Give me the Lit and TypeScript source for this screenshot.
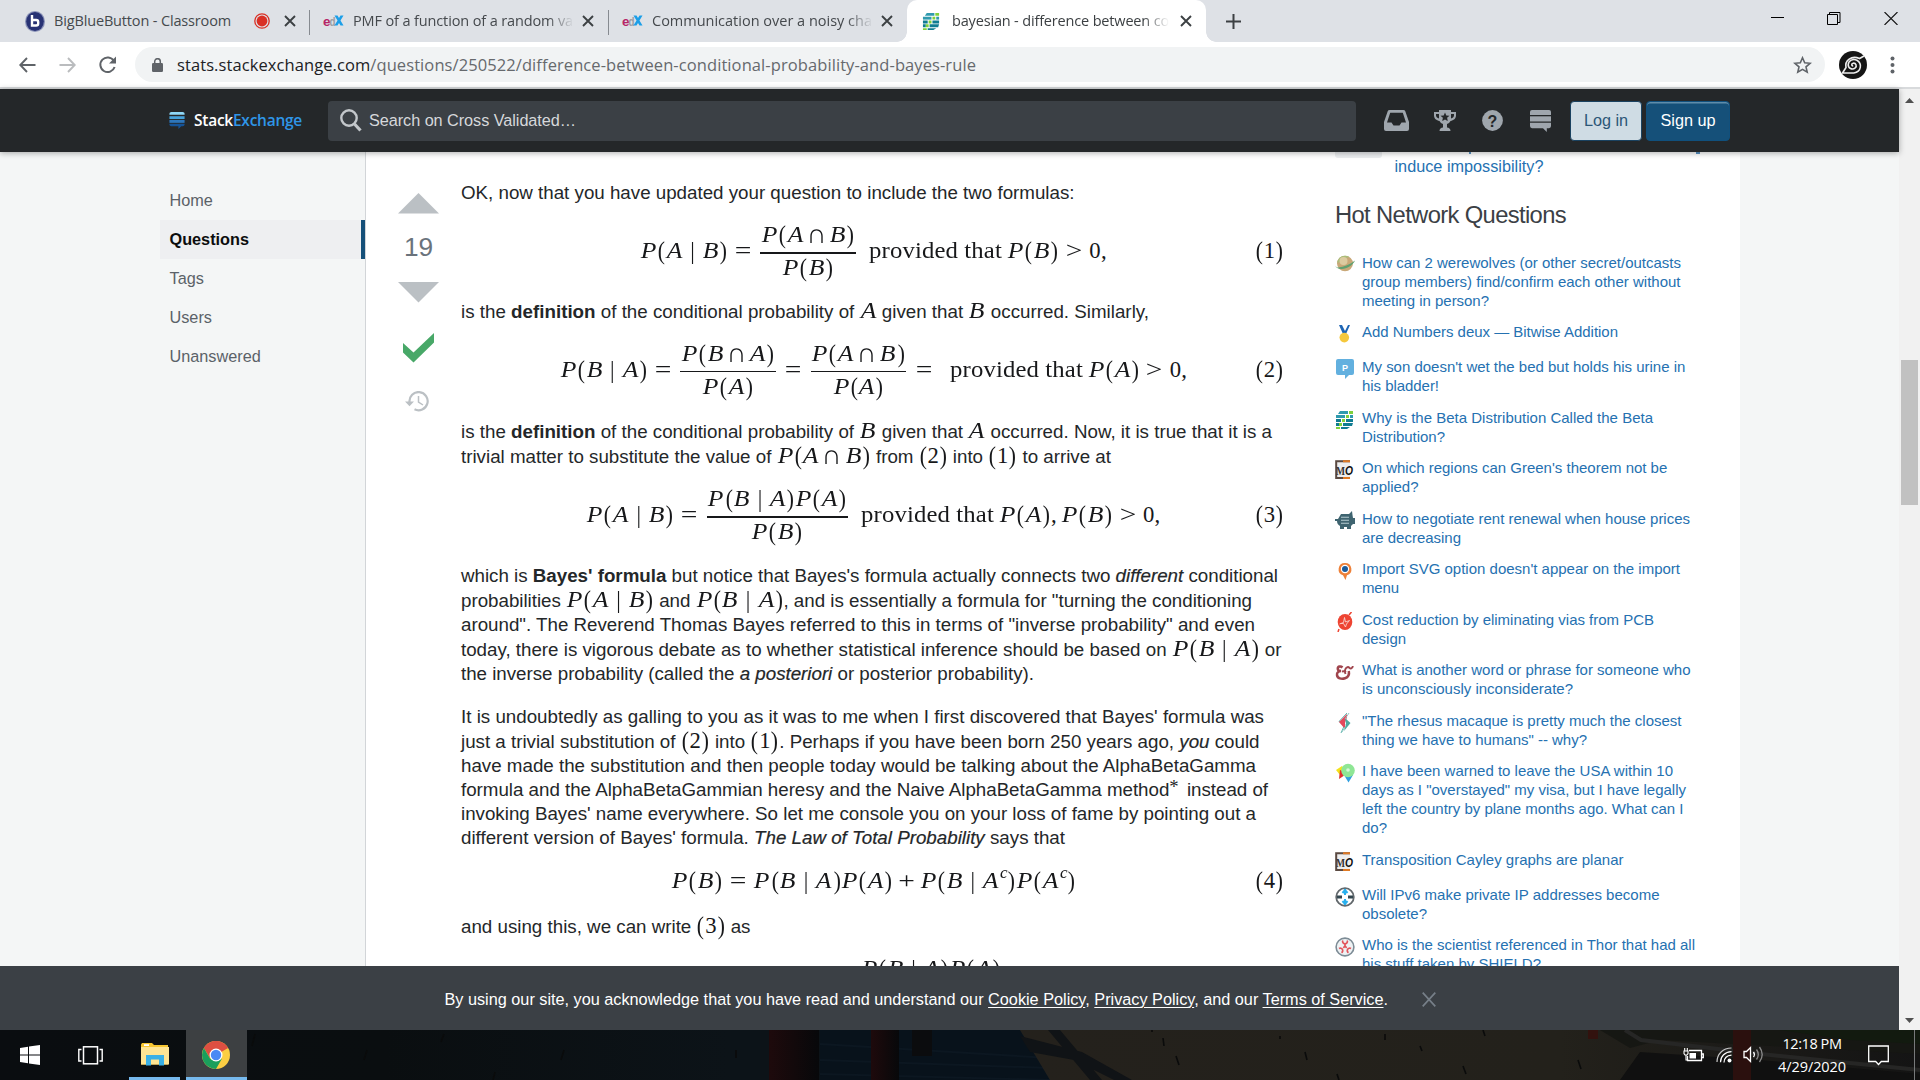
import { LitElement, html, svg, css, TemplateResult } from "lit";
import { customElement } from "lit/decorators.js";

type T = TemplateResult;

/* ---------- math typesetting ---------- */
const WIDTHS: Record<string, number> = {
  P: 0.751, A: 0.75, B: 0.759, "(": 0.389, ")": 0.389, "|": 0.834, "=": 1.334,
  ">": 1.334, "+": 1.2, "∩": 1.111, ",": 0.278, " ": 0.167,
};
const glyph = (ch: string) => {
  const w = WIDTHS[ch] ?? 0.5;
  if (ch === "c") return html`<span class="g sup-c" style="width:.35em">c</span>`;
  const kind = /[PAB]/.test(ch) ? "it" : /[()]/.test(ch) ? "par" : ch === "|" ? "mid" : ch === "∩" ? "cap" : /[=>+]/.test(ch) ? "op" : "rm";
  return html`<span class="g ${kind}" style="width:${w}em">${ch}</span>`;
};
const m = (s: string) => html`<span class="m">${[...s].map(glyph)}</span>`;
const frac = (n: string, d: string, thick = true) => html`<span class="frac">
  <span class="num">${m(n)}</span><span class="rule ${thick ? "thick" : ""}"></span><span class="den">${m(d)}</span></span>`;
const provided = () => html`<span class="prov"><span class="fit wide" data-w="122">provided that</span></span>`;

/* ---------- icons ---------- */
const statsIcon = svg`
  <g fill="#2f9aae"><path d="M5 1h8v3H3z"/><path d="M1 5h9v3H1z"/><path d="M15 5h3v3h-3z"/></g>
  <g fill="#107c92"><path d="M1 9h5v3H1zM11 9h7v3h-7z"/><path d="M8 13h10l-1 3H8zM1 13h3v3H1z"/><path d="M6 17h9l-3 2H6z"/></g>
  <g fill="#7fd13b"><path d="M14 1h4v3h-4zM11 5h3v3h-3zM7 9h3v3H7zM4 13h3v3H4zM1 17h4v2H1z"/></g>`;
const mo = svg`<rect x="0" y="0" width="15" height="19" fill="#eee"/><path d="M15 1.2H1.2V18H15" fill="none" stroke="#5b4a42" stroke-width="2"/>
  <path d="M8 1.2h7M8 18h7" stroke="#e07a24" stroke-width="2"/><text x="1" y="14.5" font-family="Liberation Serif" font-weight="700" font-size="12" textLength="9" lengthAdjust="spacingAndGlyphs" fill="#333">M</text><text x="10" y="14.5" font-family="Liberation Sans" font-style="italic" font-weight="700" font-size="12" fill="#111" textLength="8" lengthAdjust="spacingAndGlyphs">O</text>`;
const ICONS: Record<string, unknown> = {
  planet: svg`<ellipse cx="10" cy="8.5" rx="8" ry="7.8" fill="#c9a878"/><path d="M2.500 6a8 7.800 0 0 1 12-4c-4 0-7 4-12 6z" fill="#a9bd7a"/><circle cx="8.500" cy="6" r="4" fill="#dccba0"/><path d="M0 10.500c1 1.500 2 2 3 2 6-.5 12-3 17-7-2 5-9 9-14 8.500-3 0-5-1.500-6-3.500z" fill="#5fa070"/>`,
  medal: svg`<path d="M4 1h3l3 6 3-6h2l-4 9H8z" fill="#1f66b5"/><circle cx="9.3" cy="13.6" r="4.8" fill="#f5c83c"/>`,
  parent: svg`<path d="M3 0h14a2 2 0 0 1 2 2v12a2 2 0 0 1-2 2h-3l-4 4v-4H3a2 2 0 0 1-2-2V2a2 2 0 0 1 2-2z" fill="#62b0df"/><text x="7" y="12" font-family="Liberation Sans" font-weight="700" font-size="9" fill="#fff">P</text>`,
  stats: statsIcon,
  mo,
  pig: svg`<path d="M0 8h3l3-5h8l3-3 .5 4L18 7h2v6h-2l-2 2v3h-4v-2H9v2H5v-3c-2-1-3-3-3-5H0z" fill="#3f6470"/><path d="M6 6.2h8M6 9.2h8M6 12.2h8" stroke="#b7cbd1" stroke-width="1.1"/>`,
  gis: svg`<path d="M10 2a6.3 6.3 0 0 0-2 12.3L10.5 19l1.5-4.7A6.3 6.3 0 0 0 10 2z" fill="#ee8139"/><circle cx="10" cy="8" r="4.2" fill="#fff"/><circle cx="10" cy="8" r="3" fill="#1b5a9a"/>`,
  pcb: svg`<ellipse cx="10" cy="10" rx="7.3" ry="8" fill="#ee4432"/><path d="M14 3l2.5-3M4 17l-1 3" stroke="#ee4432" stroke-width="1.5"/><path d="M4.500 12l4-1.500 1-5 1 4.500 4-1.500-3 3.500-1 3-2-3.500h-3" fill="none" stroke="#f9d3cd" stroke-width=".9"/>`,
  amp: svg`<path d="M7.500 5.500C5.500 3.500 2.500 4.500 2.800 7c.2 1.600 1.700 2.300 3.200 2-2.500 0-4.300 1.500-4 4 .4 3.500 4.500 4.500 8 3.300 3.300-1.200 4.500-4 3.800-7.300" fill="none" stroke="#a0454d" stroke-width="2.500"/><path d="M7 9.500c1.500-.3 3-.3 4 .5M10.500 12c-1.500-3.500 0-6.500 2.500-7 1.500 0 1.500 1.800 3 1.500 1.300-.3 1.800-1.300 1.800-2.500" fill="none" stroke="#a0454d" stroke-width="1.900"/>`,
  dna: svg`<path d="M12 0L4 8.5l6 2.5-4 9" fill="none" stroke="#5fb5ae" stroke-width="1"/><path d="M12 1L4 9l6 7V9.500l2-5z" fill="#e4485c"/><path d="M10 5l5.500 5-6.500 8 2-7z" fill="#4fa9a0"/><path d="M14 0l-4 6M7 19l3-5" stroke="#8fc9c5"/>`,
  travel: svg`<path d="M1 7l6-4 4 6-6 3z" fill="#f3e21a"/><path d="M5 7l8 3-9 6z" fill="#e02f2f"/><path d="M9 12h9l-4.500 7.500z" fill="#2f9fe0"/><circle cx="13" cy="7.500" r="6.800" fill="#8fe695"/><circle cx="13" cy="7" r="1.800" fill="#d6f7d8"/>`,
  net: svg`<circle cx="10" cy="10" r="8.800" fill="#fff" stroke="#62686c" stroke-width="1.800"/><path d="M2 10h5M13 10h5" stroke="#33474f" stroke-width="3"/><path d="M10 2v6M10 12v6M7.500 6L10 3l2.500 3M7.500 14l2.500 3 2.500-3" stroke="#28b0ee" stroke-width="2" fill="none"/>`,
  scifi: svg`<circle cx="10" cy="10" r="8.900" fill="#eef2f4" stroke="#7d8c96" stroke-width="1.600"/><g fill="none" stroke="#e2555b" stroke-width="1.700"><path d="M7.800 3.500a2.400 2.400 0 1 0 4.400 0M10 7.300v2.200M8.300 10.800l1.200-1.200h1l1.200 1.200"/><path d="M4 11.500a2.300 2.300 0 1 1 2.500 4.300M16 11.500a2.300 2.300 0 1 0-2.500 4.300"/></g>`,
};
const ic = (name: string, s = 20) => html`<svg class="ic" width=${s} height=${s} viewBox="0 0 20 20">${ICONS[name]}</svg>`;

const HOT: { i: string; l: [string, number][] }[] = [
  { i: "planet", l: [["How can 2 werewolves (or other secret/outcasts", 319], ["group members) find/confirm each other without", 318.5], ["meeting in person?", 127]] },
  { i: "medal", l: [["Add Numbers deux — Bitwise Addition", 256]] },
  { i: "parent", l: [["My son doesn't wet the bed but holds his urine in", 323.3], ["his bladder!", 77]] },
  { i: "stats", l: [["Why is the Beta Distribution Called the Beta", 291], ["Distribution?", 83]] },
  { i: "mo", l: [["On which regions can Green's theorem not be", 305.3], ["applied?", 56.5]] },
  { i: "pig", l: [["How to negotiate rent renewal when house prices", 328], ["are decreasing", 99]] },
  { i: "gis", l: [["Import SVG option doesn't appear on the import", 318], ["menu", 37]] },
  { i: "pcb", l: [["Cost reduction by eliminating vias from PCB", 292], ["design", 44]] },
  { i: "amp", l: [["What is another word or phrase for someone who", 328.5], ["is unconsciously inconsiderate?", 211]] },
  { i: "dna", l: [["\"The rhesus macaque is pretty much the closest", 319.5], ["thing we have to humans\" -- why?", 225]] },
  { i: "travel", l: [["I have been warned to leave the USA within 10", 311], ["days as I \"overstayed\" my visa, but I have legally", 324], ["left the country by plane months ago. What can I", 321.5], ["do?", 25]] },
  { i: "mo", l: [["Transposition Cayley graphs are planar", 261.5]] },
  { i: "net", l: [["Will IPv6 make private IP addresses become", 297.5], ["obsolete?", 65]] },
  { i: "scifi", l: [["Who is the scientist referenced in Thor that had all", 333], ["his stuff taken by SHIELD?", 179]] },
];

const closeX = html`<svg class="tx" width="12" height="12" viewBox="0 0 12 12"><path d="M1 1l10 10M11 1L1 11" stroke="#3c4043" stroke-width="1.9"/></svg>`;
const edx = html`<svg width="21" height="14" viewBox="0 0 21 14"><text x="0" y="11.500" font-family="Liberation Sans" font-weight="700" font-size="13" textLength="7.500" lengthAdjust="spacingAndGlyphs" fill="#b72667">e</text><text x="6.500" y="11.500" font-family="Liberation Sans" font-weight="700" font-size="12" textLength="6" lengthAdjust="spacingAndGlyphs" fill="#9a9da3">d</text><path d="M11.500 1.500h3l1.500 2.500 1.500-2.500h3L17.500 6.500l3 5h-3L16 9l-1.500 2.500h-3l3-5z" fill="#1c9fe8"/></svg>`;

@customElement("app-root")
export class AppRoot extends LitElement {
  static styles = css`
    :host { display: block; width: 1920px; height: 1080px; overflow: hidden; font-family: "Liberation Sans", Arial, sans-serif; color: #242729; }
    * { box-sizing: border-box; }
    svg { display: block; flex: none; }
    .fit { display: inline-block; white-space: nowrap; }
    .app { width: 1920px; height: 1080px; display: flex; flex-direction: column; overflow: hidden; }
    .ui { font-family: "Open Sans", "Noto Sans", sans-serif; }

    .tabs { height: 42px; flex: none; background: #dee1e6; display: flex; font-size: 14.5px; color: #45494d; }
    .tab { height: 42px; display: flex; align-items: center; position: relative; }
    .tab .t { overflow: hidden; white-space: nowrap; line-height: 42px; height: 42px; flex: none; }
    .fade { -webkit-mask-image: linear-gradient(90deg, #000 88%, transparent 100%); }
    .sep { width: 1px; height: 25px; background: #868a90; align-self: center; margin-top: 2px; flex: none; }
    .t1 { width: 309px; padding-left: 25px; }
    .t1 .t { margin-left: 9px; width: 192px; }
    .t1 .rec { margin-left: 29px; }
    .t1 .tx { margin-left: 14px; }
    .t2 { width: 298px; padding-left: 13px; }
    .t2 .t { margin-left: 9px; width: 221px; }
    .t2 .tx { margin-left: 8px; }
    .t4 { width: 299px; background: #fff; border-radius: 10px 10px 0 0; padding-left: 15px; color: #3c4043; }
    .t4 .t { margin-left: 11px; width: 217px; }
    .t4 .tx { margin-left: 11px; }
    .t4::before, .t4::after { content: ""; position: absolute; bottom: 0; width: 10px; height: 10px; }
    .t4::before { left: -10px; background: radial-gradient(circle at 0 0, transparent 9.5px, #fff 10px); }
    .t4::after { right: -10px; background: radial-gradient(circle at 100% 0, transparent 9.5px, #fff 10px); }
    .plus { margin: 14px 0 0 20px; }
    .win { margin-left: auto; display: flex; padding: 12px 22px 0 0; gap: 43px; }

    .bar { height: 47px; flex: none; background: #fff; border-bottom: 2px solid #d8dadc; display: flex; align-items: center; padding-left: 18px; }
    .bar .b2 { margin-left: 21px; }
    .bar .b3 { margin-left: 21px; }
    .omni { margin-left: 18px; margin-right: 14px; width: 1690px; height: 35px; border-radius: 18px; background: #f1f3f4; display: flex; align-items: center; padding: 0 13px 0 17px; font-size: 16.5px; color: #66696d; }
    .omni .url { margin-left: 14px; line-height: 33px; }
    .omni b { font-weight: 400; color: #202124; }
    .omni .star { margin-left: auto; }
    .kebab { margin-left: 23px; }

    .view { height: 941px; flex: none; display: flex; }
    .page { width: 1899px; display: flex; flex-direction: column; position: relative; }
    .sb { width: 21px; background: #f1f1f1; display: flex; flex-direction: column; align-items: center; padding-top: 9px; }
    .sb .thumb { width: 17px; height: 145px; margin-top: 257px; background: #c1c1c1; }
    .sb .dn { margin-top: auto; margin-bottom: 7px; }

    .top { height: 63px; flex: none; background: #242729; display: flex; align-items: center; padding-left: 169px; box-shadow: 0 1px 6px rgba(12,13,14,.35); position: relative; z-index: 2; }
    .mark { margin-top: -2px; }
    .logo { margin-left: 9px; margin-top: -2px; width: 134px; font-size: 15.500px; font-family: "Open Sans", sans-serif; font-weight: 600; color: #fff; line-height: 20px; }
    .logo b { color: #2f96e8; font-weight: 600; }
    .search { width: 1028px; height: 40px; background: #3b4045; border-radius: 4px; display: flex; align-items: center; padding-left: 12px; font-size: 16.25px; color: #d6d8db; }
    .search .fit { margin-left: 7px; }
    .ticons { display: flex; align-items: center; margin-left: 28px; width: 186px; }
    .i2 { margin-left: 25px; } .i3 { margin-left: 26px; } .i4 { margin-left: 27px; }
    .btn { height: 40px; border-radius: 4px; font-size: 16.25px; display: flex; align-items: center; justify-content: center; border: 1px solid #1a4260; }
    .login { width: 72px; background: #cfdce4; color: #2c5777; }
    .signup { width: 84px; margin-left: 4px; background: #155079; color: #fff; border-color: #10507d; box-shadow: inset 0 1.5px 0 #5f8caa; }

    .main { height: 814px; flex: none; background: #f4f6f6; display: flex; padding-left: 160px; overflow: hidden; }
    .nav { width: 205px; padding-top: 29px; font-size: 16.25px; color: #5b6268; }
    .nav div { height: 39px; line-height: 39px; padding-left: 9.500px; }
    .nav .on { background: #eeeff1; font-weight: 700; color: #0c0d0e; border-right: 4px solid #155079; }
    .content { width: 1375px; background: #fff; border-left: 1px solid #d2d5d8; display: flex; }
    .vote { width: 95px; padding: 41px 0 0 32px; display: flex; flex-direction: column; }
    .vote .n { width: 41px; text-align: center; font-size: 26.25px; line-height: 30px; color: #6a737c; margin: 18px 0 20px; }
    .post { width: 825px; padding-top: 29px; font-size: 18.75px; color: #242729; }
    .ln { height: 24px; line-height: 24px; white-space: nowrap; width: max-content; }
    .ln.k { height: 25px; }
    .p2 { margin-top: 19px; }
    i { font-style: italic; -webkit-text-stroke: .2px #242729; }

    .m { font: 22.7px "Liberation Serif", serif; line-height: 0; letter-spacing: 0; white-space: nowrap; color: #17181a; }
    .g { display: inline-block; line-height: 0; text-align: center; height: 0; }
    .it { font-style: italic; transform: scale(1.13, 1.05); }
    .par { transform: scale(.95, 1.14); }
    .mid { transform: scaleY(1.14); }
    .op { transform: scaleX(1.3); }
    .cap { transform: scale(1.22, 1.2); }
    .sup-c { font-style: italic; position: relative; top: -8px; transform: scale(.75); }
    .star-sup { position: relative; top: -3px; font-family: "Liberation Serif", serif; line-height: 0; margin-right: 3px; }
    .eq { height: 95px; display: grid; grid-template-columns: 1fr auto 1fr; padding-top: 34px; font: 22.7px/24px "Liberation Serif", serif; color: #17181a; }
    .eq.e2 { height: 96px; }
    .eq.e4 { height: 65px; padding-top: 19px; }
    .eq .c { grid-column: 2; display: flex; align-items: flex-start; height: 24px; }
    .eq .c.shift { padding-left: 115px; }
    .eq .c .m, .eq .r .m, .num .m, .den .m { line-height: 24px; }
    .eq .r { grid-column: 3; justify-self: end; padding-right: 2px; height: 24px; }
    .frac { display: flex; flex-direction: column; align-items: center; margin: -16px 2.700px 0 2.200px; }
    .num { height: 29px; padding: 0 .7px; }
    .rule { width: 100%; height: 1px; background: #17181a; margin-bottom: 1px; flex: none; }
    .rule.thick { height: 2px; margin-bottom: 0; }
    .den { height: 24px; margin-top: 2px; }
    .prov { margin-left: 10.500px; width: 138px; flex: none; }
    .wide { transform: scaleX(1.09); transform-origin: 0 0; }

    .aside { padding-left: 49px; width: 420px; font-size: 15px; color: #2571b1; }
    .cut { height: 5px; display: flex; align-items: flex-start; }
    .cut .box { width: 47px; height: 6px; background: #eceef0; border-radius: 0 0 3px 3px; }
    .cut .d1 { width: 2px; height: 1.500px; background: #5a93c4; margin-left: 87px; }
    .cut .d2 { width: 4px; height: 1.500px; background: #5a93c4; margin-left: 225px; }
    .rel { margin: 0 0 0 59.500px; font-size: 16.25px; line-height: 19px; height: 19px; }
    .hnq { font-size: 23.75px; line-height: 28px; color: #3b4045; margin-top: 25px; margin-bottom: 23.800px; height: 28px; }
    .hot { display: flex; min-height: 22.500px; margin-bottom: 12.500px; line-height: 19px; }
    .hot .ic { margin: 2px 7px 0 0; }
    .hot .x { height: 19px; white-space: nowrap; width: max-content; }

    .cookie { height: 64px; flex: none; background: #3b4045; color: #fff; font-size: 16.25px; display: flex; align-items: center; padding: 2px 0 0 444.500px; }
    .cookie .cx { margin-left: 34px; }
    u { text-underline-offset: 2px; text-decoration-thickness: 1.200px; }

    .task { height: 50px; flex: none; display: flex; position: relative; overflow: hidden; color: #fff; background: #0a0e12; }
    .wall { position: absolute; left: 0; top: 0; }
    .task > :not(.wall) { position: relative; }
    .tb { display: flex; justify-content: center; height: 50px; padding-top: 11px; border-bottom: 3px solid transparent; }
    .start { width: 60px; padding-top: 15px; } .tv { width: 60px; padding-top: 16px; }
    .fold { width: 51px; margin-left: 9px; border-color: #76b9ed; padding-top: 13px; }
    .chr { width: 61px; margin-left: 6px; background: #3d4042; border-color: #76b9ed; padding-right: 1px; }
    .tray { margin-left: auto; display: flex; padding-right: 5px; }
    .bat { margin: 17px 12px 0 0; } .wifi { margin: 17px 11px 0 0; } .vol { margin: 15px 14px 0 0; }
    .clock { width: 68px; text-align: center; font-size: 14.500px; line-height: 23px; padding-top: 2px; margin-right: 22px; display: flex; flex-direction: column; align-items: center; }
    .note { margin-top: 15px; }
    .desk { width: 1px; height: 50px; background: #77797a; margin-left: 25px; }
  `;

  firstUpdated() {
    const width = (el: HTMLElement) => {
      const r = el.getBoundingClientRect().width;
      return el.classList.contains("wide") ? r / 1.09 : r;
    };
    this.renderRoot.querySelectorAll<HTMLElement>("[data-w]").forEach((el) => {
      const w = Number(el.dataset.w);
      const a = width(el);
      el.style.letterSpacing = "1px";
      const b = width(el);
      el.style.letterSpacing = b > a ? `${((w - a) / (b - a)).toFixed(4)}px` : "";
    });
  }

  ln(w: number, t: T | string, k = false) {
    return html`<div class="ln ${k ? "k" : ""}" data-w=${w}>${t}</div>`;
  }

  chrome() {
    return html`<div class="tabs ui">
      <div class="tab t1"><svg width="20" height="25" viewBox="0 0 20 25"><ellipse cx="10" cy="12.500" rx="10" ry="10.500" fill="#8b93b8"/><ellipse cx="10" cy="12.500" rx="8.800" ry="9.500" fill="#283274"/><path d="M7 6v10.500h4.200a2 2 0 0 0 2-2v-1.500a2 2 0 0 0-2-2H7" fill="none" stroke="#fff" stroke-width="2.400"/></svg>
        <span class="t"><span class="fit" data-w="177">BigBlueButton - Classroom</span></span>
        <svg class="rec" width="16" height="16" viewBox="0 0 16 16" style="margin-left:8px"><circle cx="8" cy="8" r="7.200" fill="none" stroke="#d93025" stroke-width="1.300"/><circle cx="8" cy="8" r="5.400" fill="#d93025"/></svg>${closeX}</div>
      <span class="sep"></span>
      <div class="tab t2">${edx}<span class="t fade"><span class="fit" data-w="220">PMF of a function of a random va</span></span>${closeX}</div>
      <span class="sep"></span>
      <div class="tab t2">${edx}<span class="t fade"><span class="fit" data-w="220">Communication over a noisy cha</span></span>${closeX}</div>
      <div class="tab t4">${ic("stats", 19)}<span class="t fade"><span class="fit" data-w="217">bayesian - difference between co</span></span>${closeX}</div>
      <svg class="plus" width="15" height="15" viewBox="0 0 15 15"><path d="M7.500 0v15M0 7.500h15" stroke="#3c4043" stroke-width="2"/></svg>
      <div class="win"><svg width="13" height="13"><path d="M0 5.500h13" stroke="#000"/></svg>
        <svg width="14" height="13" viewBox="0 0 14 13"><path d="M.5 2.500h10v10H.5zM2.500 2.500V.5h10.500v10h-2.500" fill="none" stroke="#000"/></svg>
        <svg width="14" height="13" viewBox="0 0 14 13"><path d="M.5 0l13 13M13.500 0L.5 13" stroke="#111" stroke-width="1.100"/></svg></div>
    </div>
    <div class="bar ui">
      <svg width="19" height="18" viewBox="0 0 19 18"><path d="M17.500 9H2.500M9 2L2.300 9 9 16" fill="none" stroke="#5f6368" stroke-width="1.900"/></svg>
      <svg class="b2" width="19" height="18" viewBox="0 0 19 18"><path d="M1.500 9h15M10 2l6.700 7L10 16" fill="none" stroke="#babcbe" stroke-width="1.900"/></svg>
      <svg class="b3" width="19" height="18" viewBox="0 0 19 18"><path d="M15.800 4.800A7.300 7.300 0 1 0 16.600 11" fill="none" stroke="#5f6368" stroke-width="2"/><path d="M18 .5v7h-7z" fill="#5f6368"/></svg>
      <div class="omni"><svg width="11" height="14" viewBox="0 0 11 14"><rect y="5" width="11" height="9" rx="1.200" fill="#5f6368"/><path d="M2.700 5V3.500a2.800 2.800 0 0 1 5.600 0V5" fill="none" stroke="#5f6368" stroke-width="1.500"/></svg>
        <span class="url fit" data-w="799"><b>stats.stackexchange.com</b>/questions/250522/difference-between-conditional-probability-and-bayes-rule</span>
        <svg class="star" width="19" height="18" viewBox="0 0 19 18"><path d="M9.500 1.800l2.200 5 5.400.5-4.100 3.600 1.200 5.300-4.700-2.800-4.700 2.800L6 10.900 1.900 7.300l5.400-.5z" fill="none" stroke="#5f6368" stroke-width="1.600"/></svg></div>
      <svg width="28" height="28" viewBox="0 0 28 28"><circle cx="14" cy="14" r="14" fill="#151515"/><path d="M14.200 14.800c-1.800.3-2-2.200 0-2.600 2.800-.3 4 2.800 2 4.700-3 2.500-7.200.3-7-3.400.3-4 5-6.200 8.700-4.200 5.500 3.200 4.500 11.700-3 12.700H3.500L7 16.500C5.500 9.500 12.500 4 20.500 7.500L25 5" fill="none" stroke="#eee" stroke-width="1.600"/></svg>
      <svg class="kebab" width="5" height="18" viewBox="0 0 5 18"><g fill="#5f6368"><circle cx="2.500" cy="2.500" r="2"/><circle cx="2.500" cy="9" r="2"/><circle cx="2.500" cy="15.500" r="2"/></g></svg>
    </div>`;
  }

  header() {
    const c = "#9fa6ad";
    return html`<div class="top">
      <svg class="mark" width="16" height="18" viewBox="0 0 16 19"><path d="M2 1h12a2 2 0 0 1 2 2v1H0V3a2 2 0 0 1 2-2z" fill="#8fd8f7"/><path d="M0 5.500h16v3H0z" fill="#46a2da"/><path d="M0 9.500h16v3H0z" fill="#2d76bb"/><path d="M0 13.500h16a2 2 0 0 1-2 2.500h-1.500L9.500 19v-3H2a2 2 0 0 1-2-2.500z" fill="#155397"/></svg>
      <span class="logo"><span class="fit" data-w="108">Stack<b>Exchange</b></span></span>
      <div class="search"><svg width="22" height="23" viewBox="0 0 22 23"><circle cx="9" cy="9" r="7.700" fill="none" stroke="#c3c7cb" stroke-width="2.400"/><path d="M14.500 15l6 6.500" stroke="#c3c7cb" stroke-width="3.200"/></svg><span class="fit" data-w="207">Search on Cross Validated…</span></div>
      <div class="ticons">
        <svg width="25" height="21" viewBox="0 0 25 21"><path fill-rule="evenodd" fill="${c}" d="M5.500 0h14a2 2 0 0 1 1.800 1.200L25 12v7a2 2 0 0 1-2 2H2a2 2 0 0 1-2-2v-7L3.700 1.200A2 2 0 0 1 5.500 0zM6.200 2.800L3 12.500h4.500l2 3h6l2-3H22L18.800 2.800z"/></svg>
        <svg class="i2" width="22" height="21" viewBox="0 0 22 21"><path fill="${c}" d="M5 0h12v2h5v3.500c0 3-2.500 5-5.500 5.500-.8 1.500-2 2.600-3.500 3v3.500c2 .3 3.500 1.200 3.500 3.500h-11c0-2.300 1.500-3.200 3.500-3.500V14c-1.500-.4-2.700-1.500-3.500-3C2.500 10.500 0 8.500 0 5.500V2h5z"/><path d="M2 4h3v4.500C3.500 8 2 7 2 5.500zM20 4h-3v4.500c1.500-.5 3-1.500 3-3zM11 2.500l1.300 2.900 3.200.3-2.400 2.100.7 3.200L11 9.400 8.200 11l.7-3.200-2.400-2.100 3.200-.3z" fill="#242729"/></svg>
        <svg class="i3" width="21" height="21" viewBox="0 0 21 21"><circle cx="10.500" cy="10.500" r="10.400" fill="${c}"/><text x="5.600" y="16.500" font-family="Liberation Sans" font-weight="700" font-size="16" fill="#242729">?</text></svg>
        <svg class="i4" width="21" height="22" viewBox="0 0 21 22"><g fill="${c}"><path d="M2 0h17a2 2 0 0 1 2 2v3H0V2a2 2 0 0 1 2-2z"/><path d="M0 6.300h21v5.200H0z"/><path d="M0 12.800h21V16a2.300 2.300 0 0 1-2 2.300h-2.200V22L13 18.300H2A2.300 2.300 0 0 1 0 16z"/></g></svg>
      </div>
      <div class="btn login"><span class="fit" data-w="44">Log in</span></div><div class="btn signup"><span class="fit" data-w="55">Sign up</span></div>
    </div>`;
  }

  post() {
    return html`<div class="post">
      ${this.ln(613.5, "OK, now that you have updated your question to include the two formulas:")}
      <div class="eq"><span class="c">${m("P(A|B)=")}${frac("P(A∩B)", "P(B)")}${provided()}${m("P(B)>0,")}</span><span class="r">${m("(1)")}</span></div>
      ${this.ln(688, html`is the <b>definition</b> of the conditional probability of ${m("A")} given that ${m("B")} occurred. Similarly,`)}
      <div class="eq e2"><span class="c">${m("P(B|A)=")}${frac("P(B∩A)", "P(A)", false)}${m("=")}${frac("P(A∩B)", "P(A)", false)}${m("=")}${provided()}${m("P(A)>0,")}</span><span class="r">${m("(2)")}</span></div>
      ${this.ln(811, html`is the <b>definition</b> of the conditional probability of ${m("B")} given that ${m("A")} occurred. Now, it is true that it is a`, true)}
      ${this.ln(650, html`trivial matter to substitute the value of ${m("P(A∩B)")} from ${m("(2)")} into ${m("(1)")} to arrive at`)}
      <div class="eq"><span class="c">${m("P(A|B)=")}${frac("P(B|A)P(A)", "P(B)")}${provided()}${m("P(A), P(B)>0,")}</span><span class="r">${m("(3)")}</span></div>
      ${this.ln(817, html`which is <b>Bayes' formula</b> but notice that Bayes's formula actually connects two <i>different</i> conditional`, true)}
      ${this.ln(791, html`probabilities ${m("P(A|B)")} and ${m("P(B|A)")}, and is essentially a formula for "turning the conditioning`)}
      ${this.ln(794, `around". The Reverend Thomas Bayes referred to this in terms of "inverse probability" and even`, true)}
      ${this.ln(820.5, html`today, there is vigorous debate as to whether statistical inference should be based on ${m("P(B|A)")} or`)}
      ${this.ln(573, html`the inverse probability (called the <i>a posteriori</i> or posterior probability).`)}
      <div class="p2">
      ${this.ln(803, "It is undoubtedly as galling to you as it was to me when I first discovered that Bayes' formula was", true)}
      ${this.ln(798.5, html`just a trivial substitution of ${m("(2)")} into ${m("(1)")}. Perhaps if you have been born 250 years ago, <i>you</i> could`)}
      ${this.ln(795, "have made the substitution and then people today would be talking about the AlphaBetaGamma")}
      ${this.ln(807, html`formula and the AlphaBetaGammian heresy and the Naive AlphaBetaGamma method<span class="star-sup">*</span> instead of`)}
      ${this.ln(795, "invoking Bayes' name everywhere. So let me console you on your loss of fame by pointing out a")}
      ${this.ln(604, html`different version of Bayes' formula. <i>The Law of Total Probability</i> says that`)}
      </div>
      <div class="eq e4"><span class="c">${m("P(B)=P(B|A)P(A)+P(B|Ac)P(Ac)")}</span><span class="r">${m("(4)")}</span></div>
      ${this.ln(289.5, html`and using this, we can write ${m("(3)")} as`)}
      <div class="eq"><span class="c shift"><span class="frac">${m("P(B|A)P(A)")}</span></span></div>
    </div>`;
  }

  render() {
    return html`<div class="app">
      ${this.chrome()}
      <div class="view">
        <div class="page">
          ${this.header()}
          <div class="main">
            <div class="nav"><div>Home</div><div class="on">Questions</div><div>Tags</div><div>Users</div><div>Unanswered</div></div>
            <div class="content">
              <div class="vote">
                <svg width="41" height="21" viewBox="0 0 41 21"><path d="M0 20.500L20.500 0 41 20.500z" fill="#bbc0c4"/></svg>
                <div class="n">19</div>
                <svg width="41" height="21" viewBox="0 0 41 21"><path d="M0 0h41L20.500 20.500z" fill="#bbc0c4"/></svg>
                <svg width="41" height="30" viewBox="0 0 41 30" style="margin-top:30px"><path d="M5 10l10.500 9.500L36 0v9.500L15.500 29.500 5 19.500z" fill="#48a868"/></svg>
                <svg width="41" height="21" viewBox="0 0 41 21" style="margin-top:28px"><path d="M11.500 11a9.100 9.100 0 1 1 5 7.300" fill="none" stroke="#bbc0c4" stroke-width="2.200"/><path d="M7 10.500h9l-4.500 4.800z" fill="#bbc0c4"/><path d="M20.500 5v6l4.500 3" fill="none" stroke="#bbc0c4" stroke-width="1.500"/></svg>
              </div>
              ${this.post()}
              <div class="aside">
                <div class="cut"><span class="box"></span><span class="d1"></span><span class="d2"></span></div>
                <div class="rel"><span class="fit" data-w="149">induce impossibility?</span></div>
                <div class="hnq"><span class="fit" data-w="231">Hot Network Questions</span></div>
                ${HOT.map((h) => html`<div class="hot">${ic(h.i)}<div>${h.l.map(([t, w]) => html`<div class="x" data-w=${w}>${t}</div>`)}</div></div>`)}
              </div>
            </div>
          </div>
          <div class="cookie"><span class="fit" data-w="943.5">By using our site, you acknowledge that you have read and understand our <u>Cookie Policy</u>, <u>Privacy Policy</u>, and our <u>Terms of Service</u>.</span>
            <svg class="cx" width="14" height="15" viewBox="0 0 14 15"><path d="M.7.700l12.600 13.600M13.300.7L.7 14.300" stroke="#767f88" stroke-width="1.700"/></svg></div>
        </div>
        <div class="sb"><svg width="9" height="5"><path d="M0 5l4.500-5L9 5z" fill="#505050"/></svg><div class="thumb"></div><svg class="dn" width="9" height="5"><path d="M0 0h9L4.500 5z" fill="#505050"/></svg></div>
      </div>
      <div class="task ui">
        <svg class="wall" width="1920" height="50" viewBox="0 0 1920 50">
          <defs><linearGradient id="a"><stop offset="0" stop-color="#0a0d10"/><stop offset=".2" stop-color="#0a0e10"/><stop offset=".38" stop-color="#0c1318"/></linearGradient>
          <linearGradient id="b"><stop offset="0" stop-color="#24211c"/><stop offset=".6" stop-color="#23211b"/><stop offset="1" stop-color="#141414"/></linearGradient>
          <linearGradient id="r"><stop offset="0" stop-color="#1e0a0c"/><stop offset="1" stop-color="#07080a"/></linearGradient></defs>
          <rect width="1920" height="50" fill="url(#a)"/><rect x="820" width="230" height="50" fill="#08121b"/>
          <path d="M820 14l230 14M820 30l230 8M820 44l230 6" stroke="#0c1721" stroke-width="2"/>
          <rect x="769" width="50" height="50" fill="url(#r)"/><rect x="871" width="28" height="50" fill="url(#r)"/><rect x="912" width="20" height="26" fill="#0b0c0e"/>
          <path d="M1020 0h900v50h-870z" fill="url(#b)"/>
          <path d="M1020 6l62 16 50 28h-18l-40-20-44-8zM1048 0h12l42 50h-12z" fill="#101316"/>
          <g stroke="#0a0b0b" stroke-width="1.600"><path d="M255 4l-3 12M444 4l-3 8M367 20l-3 10M564 20l-3 10M736 20v8M495 42l-2 8M1152 0v2M1163 8l1 8M1176 26l3 9M1280 6v3M1305 22l2 8M1385 4v6M1420 16l2 5M1463 36l3 8M1337 44l2 6M1578 30l3 9M1483 0l2 6"/></g>
          <path d="M1588 0h10v9h-10z" fill="#32120e"/><path d="M1600 0h320v24l-260-14-30 8z" fill="#161713"/><path d="M1625 0l16 10 120 14 159 16" stroke="#262625" stroke-width="4" fill="none"/><path d="M1640 22l120 8 160 14v6h-300z" fill="#101010"/>
          <path d="M1733 0h18v50h-18z" fill="#2b100e"/><path d="M1780 0h140v14l-70-4z" fill="#121a0f"/>
        </svg>
        <div class="tb start"><svg width="20" height="20" viewBox="0 0 20 20"><path d="M0 3l8-1.200v7.700H0zM9 1.600L20 0v9.500H9zM0 10.500h8v7.700L0 17zM9 10.500h11V20L9 18.400z" fill="#fff"/></svg></div>
        <div class="tb tv"><svg width="25" height="19" viewBox="0 0 25 19"><rect x="5.500" y=".8" width="14" height="17" fill="none" stroke="#fff" stroke-width="1.500"/><path d="M3.500 3.500H.8V15h2.700M21.500 3.500h2.700V15h-2.700" fill="none" stroke="#fff" stroke-width="1.400"/></svg></div>
        <div class="tb fold"><svg width="28" height="23" viewBox="0 0 28 23"><path d="M0 1.500L1 0h10l2 2h14v19.500H0z" fill="#f7c632"/><path d="M0 4h28v17.500H0z" fill="#ffe594"/><rect x="3" y="1.200" width="5" height="1.800" fill="#fff"/><path d="M5 12h18v10.500h-5V16.500h-8v6H5z" fill="#3ab0e6"/></svg></div>
        <div class="tb chr"><svg width="28" height="28" viewBox="0 0 28 28"><circle cx="14" cy="14" r="14" fill="#fbce43"/><path d="M14 14L1.900 7A14 14 0 0 1 26.100 7z" fill="#dd4f41"/><path d="M14 7h12.100A14 14 0 0 0 1.900 7l6 10z" fill="#dd4f41"/><path d="M1.900 7A14 14 0 0 0 14 28l6-10.500-6 2.500-6-2.500z" fill="#1a9f5c"/><circle cx="14" cy="14" r="6.500" fill="#fff"/><circle cx="14" cy="14" r="5.200" fill="#4a8af4"/></svg></div>
        <div class="tray">
          <svg class="bat" width="21" height="15" viewBox="0 0 21 15"><path d="M6 3.500h12.500v10H4.500V9M19 7h1.300v3.500H19" fill="none" stroke="#fff" stroke-width="1.300"/><path d="M6.500 6h6.500v5.500H6.500z" fill="#fff"/><path d="M1 4h4v2.500l-1 1.500H2L1 6.500zM1.700 4V1M4.300 4V1M3 8v5h1.500" fill="none" stroke="#fff" stroke-width="1.100"/></svg>
          <svg class="wifi" width="16" height="16" viewBox="0 0 16 16"><g fill="none" stroke="#fff" stroke-width="1.200"><path d="M1 15C1 7 7 1 15.500 1" stroke="#c8c8c8"/><path d="M4.500 15.300C4.500 9 9 5 15.500 4.700"/><path d="M8 15.500c.2-4 3-7 7.500-7.300"/></g><circle cx="13.500" cy="13.500" r="2" fill="#fff"/></svg>
          <svg class="vol" width="21" height="19" viewBox="0 0 21 19"><path d="M1 6.500h2.500L7.500 2.500v14l-4-4H1z" fill="none" stroke="#fff" stroke-width="1.300"/><path d="M10.500 7q1.800 2.500 0 5" fill="none" stroke="#fff" stroke-width="1.300"/><path d="M13.500 4.500q3.600 5 0 10M16.500 2q5.400 7.500 0 15" fill="none" stroke="#8a8a8a" stroke-width="1.300"/></svg>
          <div class="clock"><span class="fit" data-w="59">12:18 PM</span><span class="fit" data-w="68">4/29/2020</span></div>
          <svg class="note" width="21" height="21" viewBox="0 0 21 21"><path d="M.7 1h19.600v15.500h-7L10.500 19.500 7.700 16.500h-7z" fill="none" stroke="#fff" stroke-width="1.300"/></svg>
          <div class="desk"></div>
        </div>
      </div>
    </div>`;
  }
}
